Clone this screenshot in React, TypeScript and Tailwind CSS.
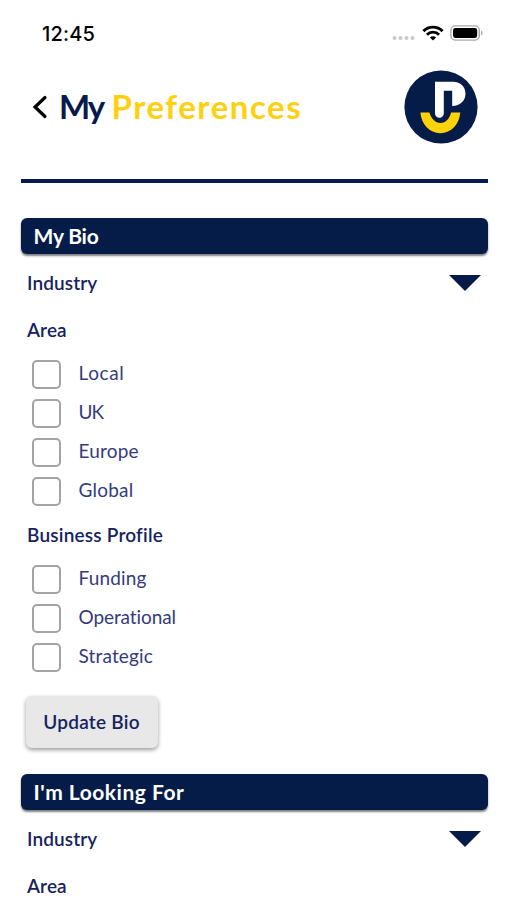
const areas = [
  { label: "Local", tracking: "tracking-[0.6px]" },
  { label: "UK", tracking: "tracking-[-1px]" },
  { label: "Europe", tracking: "tracking-[0.2px]" },
  { label: "Global", tracking: "tracking-[0.2px]" },
];

const profiles = [
  { label: "Funding", tracking: "tracking-[0.15px]" },
  { label: "Operational", tracking: "tracking-[-0.1px]" },
  { label: "Strategic", tracking: "tracking-[0.15px]" },
];

function StatusBar() {
  return (
    <div className="flex h-[66px] items-center justify-between pl-[42px] pr-[24px] text-black">
      <span className="mt-px font-['Inter',sans-serif] text-[20px] font-medium leading-none tracking-[0.2px]">
        12:45
      </span>
      <div className="flex items-center">
        <svg width="23" height="6" viewBox="0 0 23 6" className="mr-[7px] mt-[9px]" fill="#c9c9c9">
          <circle cx="2.5" cy="3" r="2" />
          <circle cx="8.5" cy="3" r="2" />
          <circle cx="14.5" cy="3" r="2" />
          <circle cx="20.5" cy="3" r="2" />
        </svg>
        <svg width="22" height="16" viewBox="0 0 22 16" className="mr-[6px]" fill="none" stroke="#000" strokeWidth="2.9">
          <path d="M1.4 6.1a13.6 13.6 0 0 1 19.2 0" />
          <path d="M4.9 9.7a8.6 8.6 0 0 1 12.2 0" />
          <path d="M11 15.6 7.9 12.5a4.4 4.4 0 0 1 6.2 0Z" fill="#000" stroke="none" />
        </svg>
        <svg width="33" height="16" viewBox="0 0 33 16">
          <rect x="0.9" y="0.9" width="28.4" height="14.2" rx="4.4" fill="none" stroke="#a8a8a8" strokeWidth="1.4" />
          <rect x="3" y="3" width="24.2" height="10" rx="2.4" fill="#000" />
          <path d="M31 5.6v4.8a2.6 2.6 0 0 0 0-4.8Z" fill="#a8a8a8" />
        </svg>
      </div>
    </div>
  );
}

function Logo() {
  return (
    <svg width="74" height="74" viewBox="0 0 74 74">
      <circle cx="37" cy="37" r="36.6" fill="#061c48" />
      <path
        d="M31 11.8H49c7.8 0 12.5 5.4 12.5 12s-5 12.2-13.3 12.2V20.8H39.8v22.5a4.4 4.4 0 0 1-8.8 0Z"
        fill="#fff"
      />
      <path
        d="M16.4 42.6H25.4c1.8 6.4 5.8 10.4 11.1 10.4s9-4 10.6-10.4h9.2c-1 12-9 20.6-19.9 20.6S17.4 54.6 16.4 42.6Z"
        fill="#ffd20a"
      />
    </svg>
  );
}

function Header() {
  return (
    <header className="flex h-[82px] items-center justify-between pl-[32px] pr-[29px]">
      <div className="flex items-center">
        <svg width="16" height="24" viewBox="0 0 16 24" fill="none" stroke="#000" strokeWidth="3.2">
          <path d="M13 2.5 3 12l10 9.5" strokeLinecap="round" strokeLinejoin="miter" />
        </svg>
        <h1 className="mb-[2px] ml-[11px] flex text-[33px] font-bold leading-none">
          <span className="w-[52.5px] tracking-[-2px] text-[#061a4c]">My</span>
          <span className="tracking-[1.5px] text-[#ffd010]">Preferences</span>
        </h1>
      </div>
      <Logo />
    </header>
  );
}

function SectionTitle({ title, tracking }: { title: string; tracking: string }) {
  return (
    <h2
      className={`flex h-[36px] items-center rounded-[6px] bg-[#061c48] pb-[2px] pl-[13px] text-[21px] font-bold leading-none text-white shadow-[0_2px_2px_rgba(0,0,0,0.5)] ${tracking}`}>
      {title}
    </h2>
  );
}

function IndustryRow() {
  return (
    <div className="mt-[5px] flex h-12 items-center justify-between pl-[6.5px] pr-[7px]">
      <span className="mb-[2px] text-[19px] font-semibold leading-none tracking-[0.1px]">Industry</span>
      <svg width="32" height="16" viewBox="0 0 32 16">
        <path d="M0 0h32L16 16Z" fill="#061c48" />
      </svg>
    </div>
  );
}

function CheckList({ items }: { items: { label: string; tracking: string }[] }) {
  return (
    <div className="pl-[11px] pt-px">
      {items.map((item) => (
        <label key={item.label} className="flex h-[39px] items-center">
          <span className="size-[29px] rounded-[5px] border-2 border-[#a3a3a3]"></span>
          <span className={`mb-[5px] ml-[18px] text-[19px] leading-none text-[#343b7c] ${item.tracking}`}>
            {item.label}
          </span>
        </label>
      ))}
    </div>
  );
}

export default function App() {
  return (
    <div className="h-[900px] w-[507px] overflow-hidden bg-white font-['Lato',sans-serif] text-[#16235f]">
      <StatusBar />
      <Header />
      <main className="pl-[20.5px] pr-[19.5px] pt-[31px]">
        <div className="h-[3.5px] bg-[#061a4c]"></div>

        <section className="mt-[35.5px]">
          <SectionTitle title="My Bio" tracking="tracking-[-0.2px]" />
          <IndustryRow />
          <h3 className="flex h-[47px] items-center pb-[2px] pl-[6.5px] text-[19px] font-semibold leading-none tracking-[0.1px]">
            Area
          </h3>
          <CheckList items={areas} />
          <h3 className="flex h-12 items-center pb-[2px] pl-[6.5px] text-[19px] font-semibold leading-none tracking-[0.2px]">
            Business Profile
          </h3>
          <CheckList items={profiles} />
          <button className="ml-[5px] mt-[19px] flex h-[52px] w-[132px] items-center justify-center rounded-[6px] bg-[#e8e8e8] pb-[2px] text-[19px] font-semibold leading-none tracking-[0.25px] shadow-[0_2px_4px_rgba(0,0,0,0.4)]">
            Update Bio
          </button>
        </section>

        <section className="mt-[26px]">
          <SectionTitle title="I'm Looking For" tracking="tracking-[0.5px]" />
          <IndustryRow />
          <h3 className="flex h-[47px] items-center pb-[2px] pl-[6.5px] text-[19px] font-semibold leading-none tracking-[0.1px]">
            Area
          </h3>
        </section>
      </main>
    </div>
  );
}
